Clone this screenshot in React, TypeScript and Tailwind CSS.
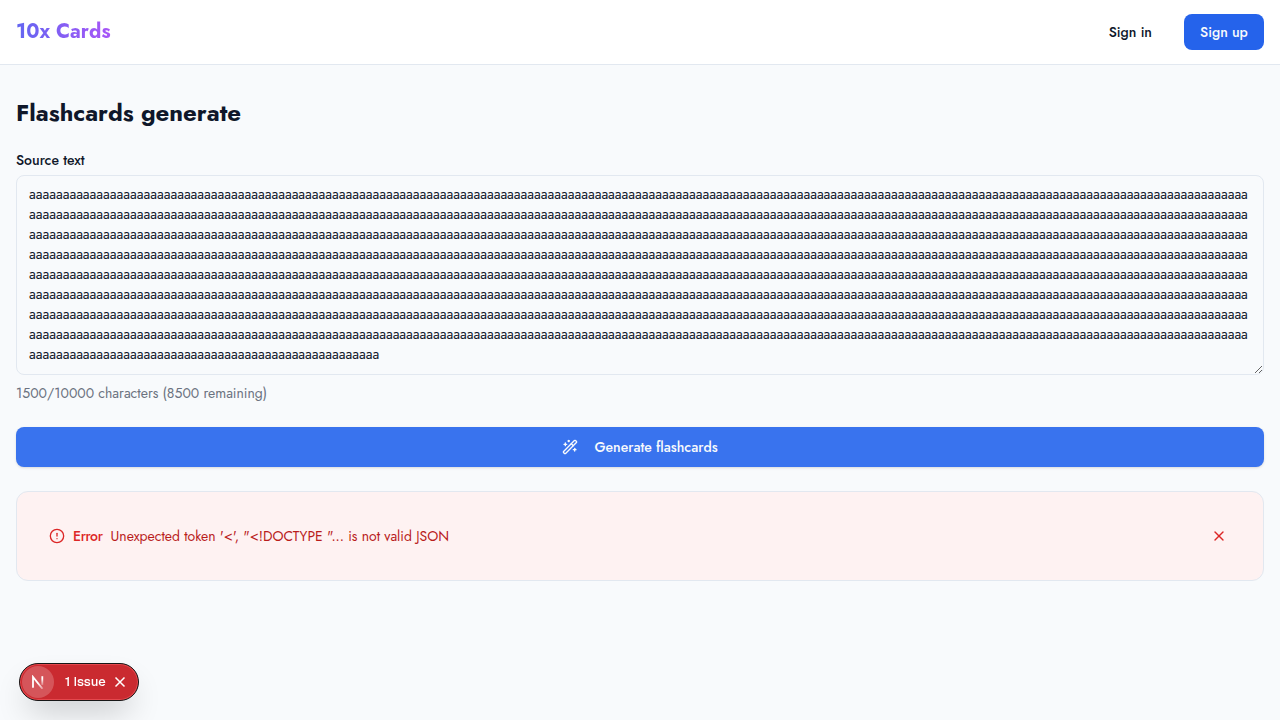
import { CircleAlert, WandSparkles, X } from "lucide-react";

const SOURCE = "a".repeat(1500);

export default function App() {
  return (
    <div className="h-screen overflow-hidden bg-[#f8fafc] font-['Jost','Lato',sans-serif] text-[#0f172a] antialiased">
      <header className="flex h-[65px] items-center justify-between border-b border-[#e2e8f0] bg-white px-4">
        <a className="bg-linear-to-r/srgb from-[#6366f1] to-[#a855f7] bg-clip-text text-xl leading-7 font-bold text-transparent">10x Cards</a>
        <nav className="flex items-center gap-4 text-sm font-medium">
          <button className="flex h-9 items-center px-4">Sign in</button>
          <button className="flex h-9 w-20 items-center justify-center rounded-lg bg-[#2563eb] text-[#f8fafc]">Sign up</button>
        </nav>
      </header>
      <main className="flex flex-col px-4 pt-8">
        <h1 className="text-2xl leading-8 font-bold whitespace-nowrap">Flashcards generate</h1>
        <label className="mt-[21px] text-sm leading-5 font-medium">Source text</label>
        <textarea
          readOnly
          defaultValue={SOURCE}
          className="mt-[5px] h-[200px] resize-y overflow-hidden rounded-lg border border-[#e2e8f0] bg-transparent px-3 py-2 text-sm leading-5 break-all outline-none"
        />
        <p className="mt-2 text-sm leading-5 text-[#6b7280]">1500/10000 characters (8500 remaining)</p>
        <button className="mt-6 flex h-10 items-center justify-center gap-4 rounded-lg bg-[#3973ee] text-sm font-medium text-[#f8fafc] shadow-sm">
          <WandSparkles size={16} />
          <span>Generate flashcards</span>
        </button>
        <section className="mt-6 flex h-[90px] items-center rounded-xl border border-[#e2e8f0] bg-[#fef2f2] px-8 text-sm">
          <CircleAlert size={16} className="text-[#dc2626]" />
          <span className="ml-2 font-medium tracking-tight text-[#dc2626]">Error</span>
          <span className="ml-2 text-[#b91c1c]">Unexpected token '&lt;', "&lt;!DOCTYPE "... is not valid JSON</span>
          <button className="mr-1 ml-auto text-[#dc2626]"><X size={16} /></button>
        </section>
      </main>
      <aside className="fixed top-[663px] left-[19px] flex h-[38px] w-[120px] items-center rounded-full border border-[#171717] bg-[#ca2a30] font-['Geist','Inter',sans-serif] text-[13px] font-medium text-white shadow-[inset_0_0_0_1px_#e5484d,0_16px_32px_-8px_rgba(0,0,0,0.24)]">
        <span className="ml-0.5 flex size-8 items-center justify-center rounded-full bg-[#d5555a]">
          <svg width="14" height="14" viewBox="0 0 14 14" fill="none">
            <path d="M2 12.8V2L11.5 13.8" stroke="url(#diagonal)" strokeWidth="1.8" />
            <path d="M11.3 1.2V10" stroke="url(#stem)" strokeWidth="1.8" />
            <defs>
              <linearGradient id="diagonal" x1="7" y1="8" x2="11.5" y2="13.8" gradientUnits="userSpaceOnUse"><stop stopColor="white" /><stop offset="1" stopColor="white" stopOpacity="0.4" /></linearGradient>
              <linearGradient id="stem" x1="0" y1="4" x2="0" y2="12" gradientUnits="userSpaceOnUse"><stop stopColor="white" /><stop offset="1" stopColor="white" stopOpacity="0" /></linearGradient>
            </defs>
          </svg>
        </span>
        <span className="ml-[11px] w-[41px] whitespace-nowrap">1 Issue</span>
        <svg className="ml-2" width="12" height="12" viewBox="0 0 12 12" stroke="white" strokeWidth="1.5"><path d="M1.5 1.5l9 9M10.5 1.5l-9 9" /></svg>
      </aside>
    </div>
  );
}
